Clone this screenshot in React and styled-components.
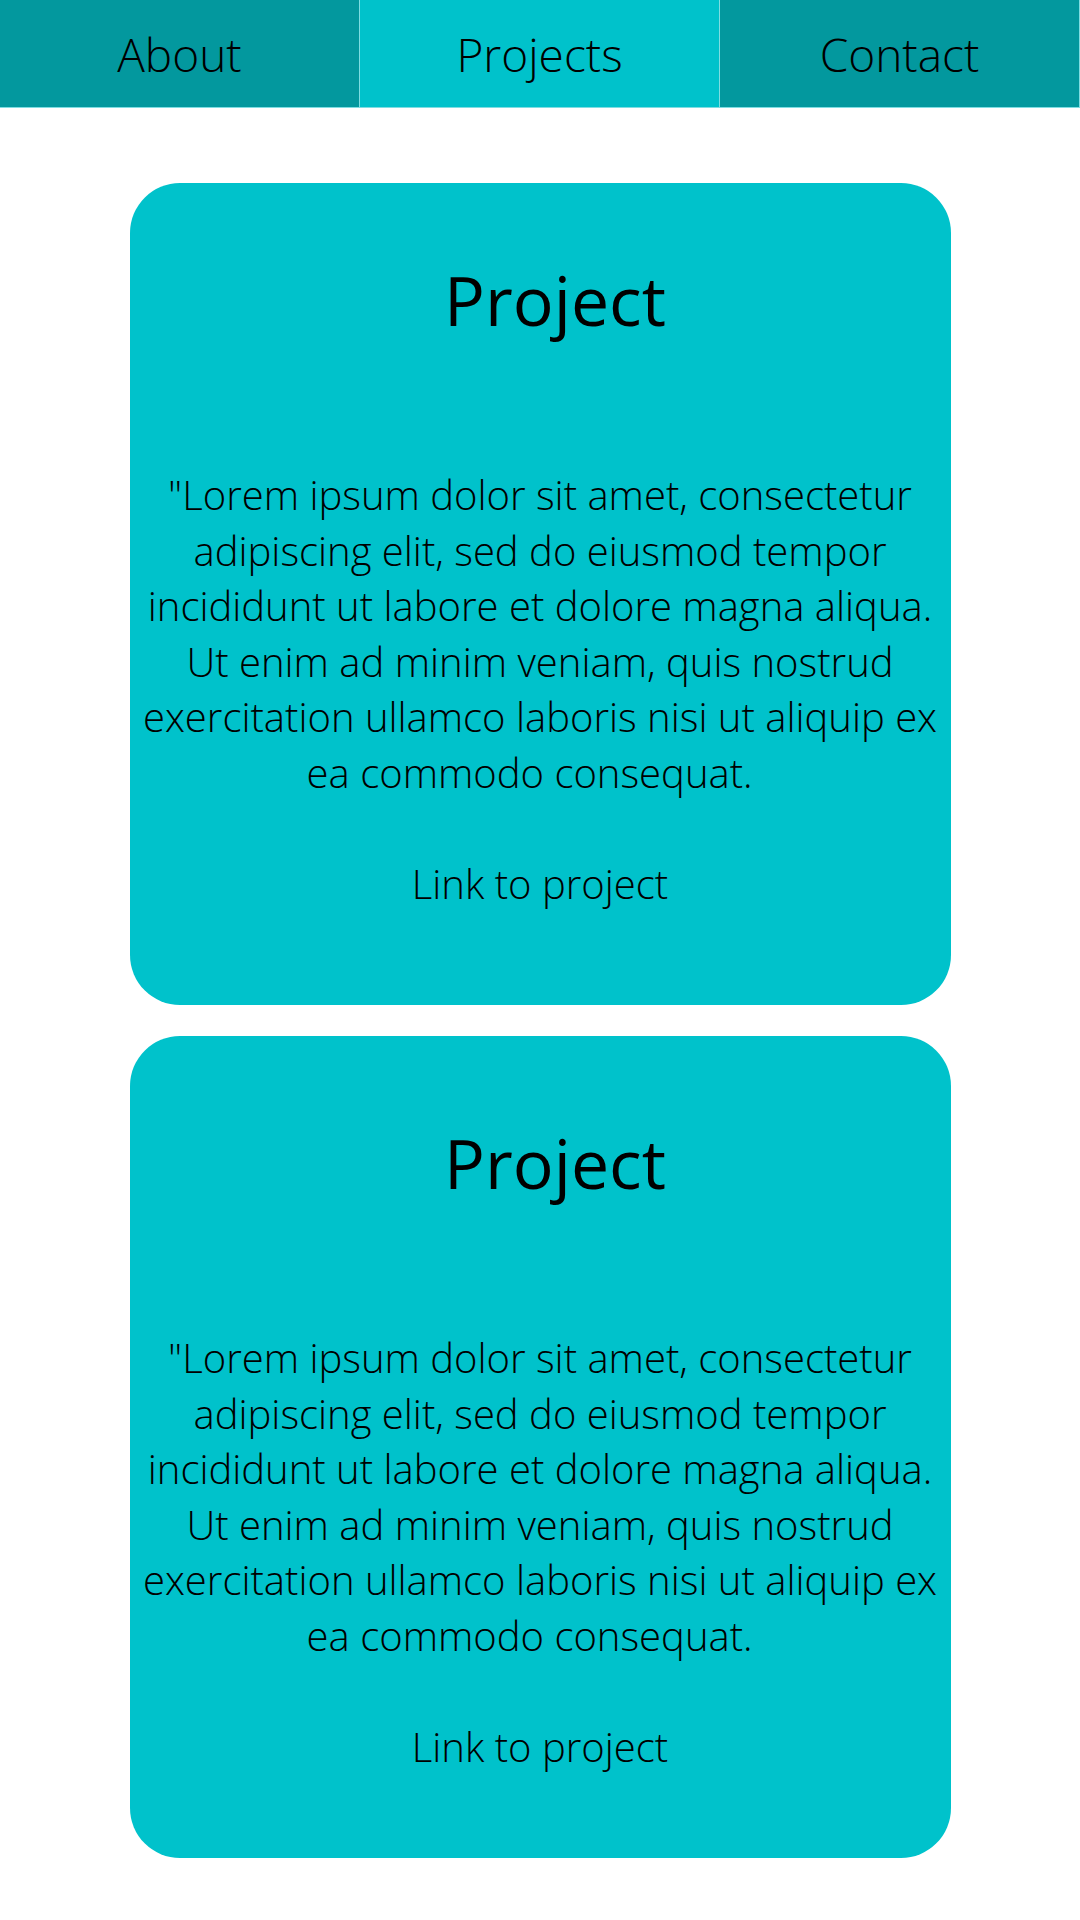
import React from 'react';
import styled, { createGlobalStyle } from 'styled-components';

const GlobalStyle = createGlobalStyle`
  body {
    margin: 0;
    background: #fff;
    font-family: "Open Sans", "Noto Sans", sans-serif;
    color: #000;
  }
`;

const tabs = ['About', 'Projects', 'Contact'];

const projects = [
  { title: 'Project', link: 'Link to project', top: 69 },
  { title: 'Project', link: 'Link to project', top: 79 },
];

const lorem =
  '"Lorem ipsum dolor sit amet, consectetur adipiscing elit, sed do eiusmod tempor incididunt ut labore et dolore magna aliqua. Ut enim ad minim veniam, quis nostrud exercitation ullamco laboris nisi ut aliquip ex ea commodo consequat.\u00a0\u00a0';

function App() {
  return (
    <>
      <GlobalStyle />
      <Nav>
        {tabs.map((tab) => (
          <Tab key={tab} active={tab === 'Projects'} href='#'>{tab}</Tab>
        ))}
      </Nav>
      <Main>
        {projects.map((p, index) => (
          <Card key={index} top={p.top}>
            <Title>{p.title}</Title>
            <Text>{lorem}</Text>
            <ProjectLink href='#'>{p.link}</ProjectLink>
          </Card>
        ))}
      </Main>
    </>
  );
}

export default App;

const Nav = styled.nav`
  display: grid;
  grid-template-columns: repeat(3, 1fr);
`;

const Tab = styled.a`
  display: flex;
  align-items: center;
  justify-content: center;
  height: 107px;
  background: ${props => props.active ? '#00c2cb' : '#03989e'};
  border-right: 1px solid #7fdde2;
  border-bottom: 1px solid #7fdde2;
  color: #000;
  text-decoration: none;
  font-size: 46px;
  font-weight: 300;
`;

const Main = styled.main`
  display: flex;
  flex-direction: column;
  align-items: center;
  gap: 31px;
  padding-top: 75px;
`;

const Card = styled.section`
  box-sizing: border-box;
  width: 821px;
  height: 822px;
  background: #00c2cb;
  border-radius: 50px;
  padding: ${props => props.top}px 8px 0;
  display: flex;
  flex-direction: column;
  align-items: center;
  text-align: center;
`;

const Title = styled.h2`
  margin: 0 0 120px;
  padding-left: 30px;
  font-size: 68px;
  font-weight: 400;
  line-height: 95px;
`;

const Text = styled.p`
  margin: 0 0 55px;
  font-size: 40px;
  font-weight: 300;
  line-height: 55.6px;
`;

const ProjectLink = styled.a`
  color: #000;
  text-decoration: none;
  font-size: 40px;
  font-weight: 300;
  line-height: 55.6px;
`;
